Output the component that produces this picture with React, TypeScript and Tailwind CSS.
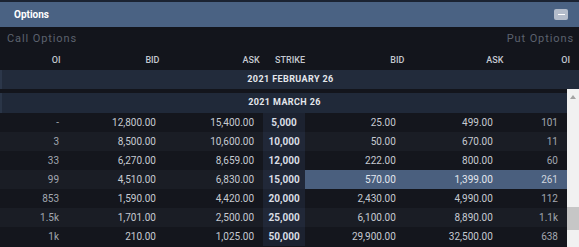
import React from "react";

const rows: string[][] = [
  ["-", "12,800.00", "15,400.00", "5,000", "25.00", "499.00", "101"],
  ["3", "8,500.00", "10,600.00", "10,000", "50.00", "670.00", "11"],
  ["33", "6,270.00", "8,659.00", "12,000", "222.00", "800.00", "60"],
  ["99", "4,510.00", "6,830.00", "15,000", "570.00", "1,399.00", "261"],
  ["853", "1,590.00", "4,420.00", "20,000", "2,430.00", "4,990.00", "112"],
  ["1.5k", "1,701.00", "2,500.00", "25,000", "6,100.00", "8,890.00", "1.1k"],
  ["1k", "210.00", "1,025.00", "50,000", "29,900.00", "32,500.00", "638"],
];

const cols = "grid grid-cols-[12fr_17.1fr_17.3fr_7.4fr_17.6fr_17.1fr_11.5fr]";

export default function App() {
  return (
    <div className="w-[579px] h-[247px] overflow-hidden bg-[#13151c] font-['Roboto',sans-serif] flex flex-col">
      {/* title bar */}
      <div className="h-[27px] shrink-0 border-t-2 border-[#1b2332] bg-[#4a6283] flex items-center justify-between pl-[14px] pr-[11px]">
        <span className="text-[10px] font-bold text-white">Options</span>
        <div className="w-[14px] h-[11px] rounded-[2px] bg-[#b3bccb] flex items-center justify-center">
          <div className="w-[7px] h-[1.5px] bg-white" />
        </div>
      </div>
      {/* sub header */}
      <div className="h-[24px] shrink-0 flex items-center justify-between pl-[7px] pr-[5px] text-[11px] tracking-[0.9px] text-[#5c626e]">
        <span>Call Options</span>
        <span>Put Options</span>
      </div>
      {/* column labels */}
      <div className={`${cols} h-[19px] shrink-0 items-center text-[9px] font-medium text-[#c3c8d0]`}>
        <div className="text-right pr-[9px]">OI</div>
        <div className="text-right pr-[9px]">BID</div>
        <div className="text-right pr-[9px]">ASK</div>
        <div className="text-center">STRIKE</div>
        <div className="text-right pr-[9px]">BID</div>
        <div className="text-right pr-[9px]">ASK</div>
        <div className="text-right pr-[9px]">OI</div>
      </div>
      {/* Feb */}
      <div className="h-[19px] shrink-0 bg-[#222b3b] border-l-2 border-[#2c374a] flex items-center justify-center text-[9px] font-bold tracking-[0.4px] text-[#e4e7ec]">
        2021 FEBRUARY 26
      </div>
      {/* scroll region */}
      <div className="flex flex-1 min-h-0">
        <div className="flex-1 flex flex-col pt-[4px]">
          <div className="h-[20px] shrink-0 bg-[#202939] border-l-2 border-[#2a3547] flex items-center justify-center text-[9px] font-bold tracking-[0.4px] text-[#e4e7ec]">
            2021 MARCH 26
          </div>
          {rows.map((r, i) => {
            const odd = i % 2 === 1;
            const rowBg = odd ? "bg-[#1a1d25]" : "bg-[#14161d]";
            const strikeBg = odd ? "bg-[#212838]" : "bg-[#1c2230]";
            const hi = i === 3;
            const putBg = hi ? "bg-[#4a5f7e]" : "";
            const putText = hi ? "text-[#e3e7ee]" : "";
            return (
              <div key={i} className={`${cols} h-[19px] shrink-0 items-center text-[10px] text-[#c6cad1] ${rowBg}`}>
                <div className="text-right pr-[9px] text-[#a2a7b0]">{r[0]}</div>
                <div className="text-right pr-[9px]">{r[1]}</div>
                <div className="text-right pr-[9px]">{r[2]}</div>
                <div className={`h-full flex items-center justify-center font-bold text-[#d9dde4] ${strikeBg}`}>{r[3]}</div>
                <div className={`h-full flex items-center justify-end pr-[9px] ${putBg} ${putText}`}>{r[4]}</div>
                <div className={`h-full flex items-center justify-end pr-[9px] ${putBg} ${putText}`}>{r[5]}</div>
                <div className={`h-full flex items-center justify-end pr-[9px] ${putBg} ${hi ? "text-[#cfd5df]" : "text-[#a2a7b0]"}`}>{r[6]}</div>
              </div>
            );
          })}
        </div>
        {/* scrollbar */}
        <div className="w-[12px] shrink-0 bg-[#f1f1f1] flex flex-col">
          <div className="h-[16px] flex items-center justify-center">
            <svg width="6" height="4" viewBox="0 0 6 4">
              <path d="M0 4 L3 0 L6 4 Z" fill="#a3a3a3" />
            </svg>
          </div>
          <div className="h-[102px]" />
          <div className="h-[23px] bg-[#c6c6c6]" />
        </div>
      </div>
    </div>
  );
}
